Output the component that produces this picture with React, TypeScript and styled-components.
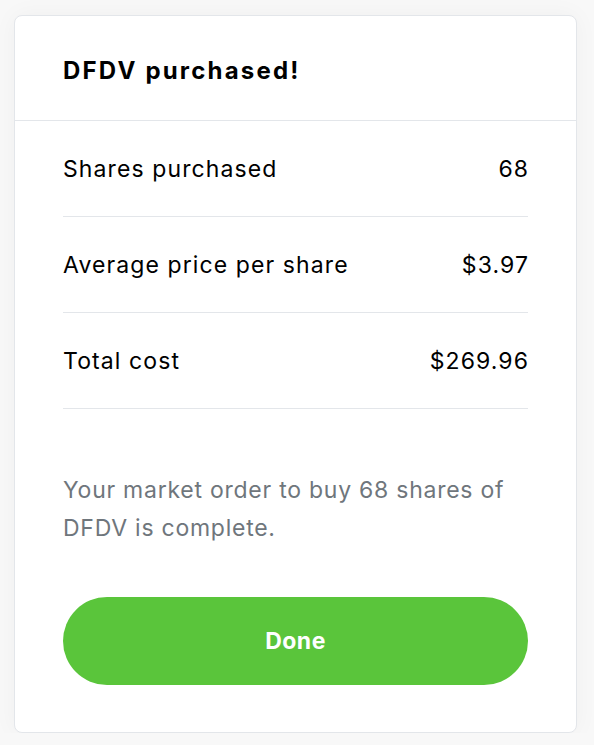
import React from "react";
import styled, { createGlobalStyle } from "styled-components";

const GlobalStyle = createGlobalStyle`
  body {
    margin: 0;
    background: #f8f8f8;
    font-family: Inter, "Liberation Sans", sans-serif;
    color: #000;
  }
`;

const Page = styled.div`
  padding: 15px 0 0 14px;
`;

const Card = styled.div`
  width: 561px;
  background: #fff;
  border: 1px solid #e3e6ea;
  border-radius: 8px;
  box-shadow: 0 0 24px rgba(0, 0, 0, 0.04);
`;

const Header = styled.div`
  height: 104px;
  padding: 0 48px;
  display: flex;
  align-items: center;
  border-bottom: 1px solid #e3e6ea;
`;

const Title = styled.h1`
  margin: 0;
  padding-top: 4px;
  font-size: 24px;
  font-weight: 700;
  letter-spacing: 2.2px;
`;

const Body = styled.div`
  padding: 0 48px 47px;
`;

const Row = styled.div`
  height: 95px;
  display: flex;
  align-items: center;
  justify-content: space-between;
  border-bottom: 1px solid #e3e6ea;
  font-size: 23px;
  letter-spacing: 1.1px;
`;

const Value = styled.span`
  margin-right: -1.1px;
`;

const Note = styled.p`
  margin: 62px 0 50px;
  font-size: 23px;
  line-height: 38px;
  letter-spacing: 0.75px;
  color: #6f767c;
`;

const DoneButton = styled.button`
  width: 100%;
  height: 88px;
  border: 0;
  border-radius: 44px;
  background: #5ac53b;
  color: #fff;
  font-family: Inter, "Liberation Sans", sans-serif;
  font-size: 23px;
  font-weight: 700;
  letter-spacing: 0.5px;
`;

interface Line {
  id: number;
  label: string;
  value: string;
}

const lines: Array<Line> = [
  { id: 1, label: "Shares purchased", value: "68" },
  { id: 2, label: "Average price per share", value: "$3.97" },
  { id: 3, label: "Total cost", value: "$269.96" },
];

export default function App() {
  return (
    <Page>
      <GlobalStyle />
      <Card>
        <Header>
          <Title>DFDV purchased!</Title>
        </Header>
        <Body>
          {lines.map((v) => (
            <Row key={v.id}>
              <span>{v.label}</span>
              <Value>{v.value}</Value>
            </Row>
          ))}
          <Note>Your market order to buy 68 shares of DFDV is complete.</Note>
          <DoneButton>Done</DoneButton>
        </Body>
      </Card>
    </Page>
  );
}
